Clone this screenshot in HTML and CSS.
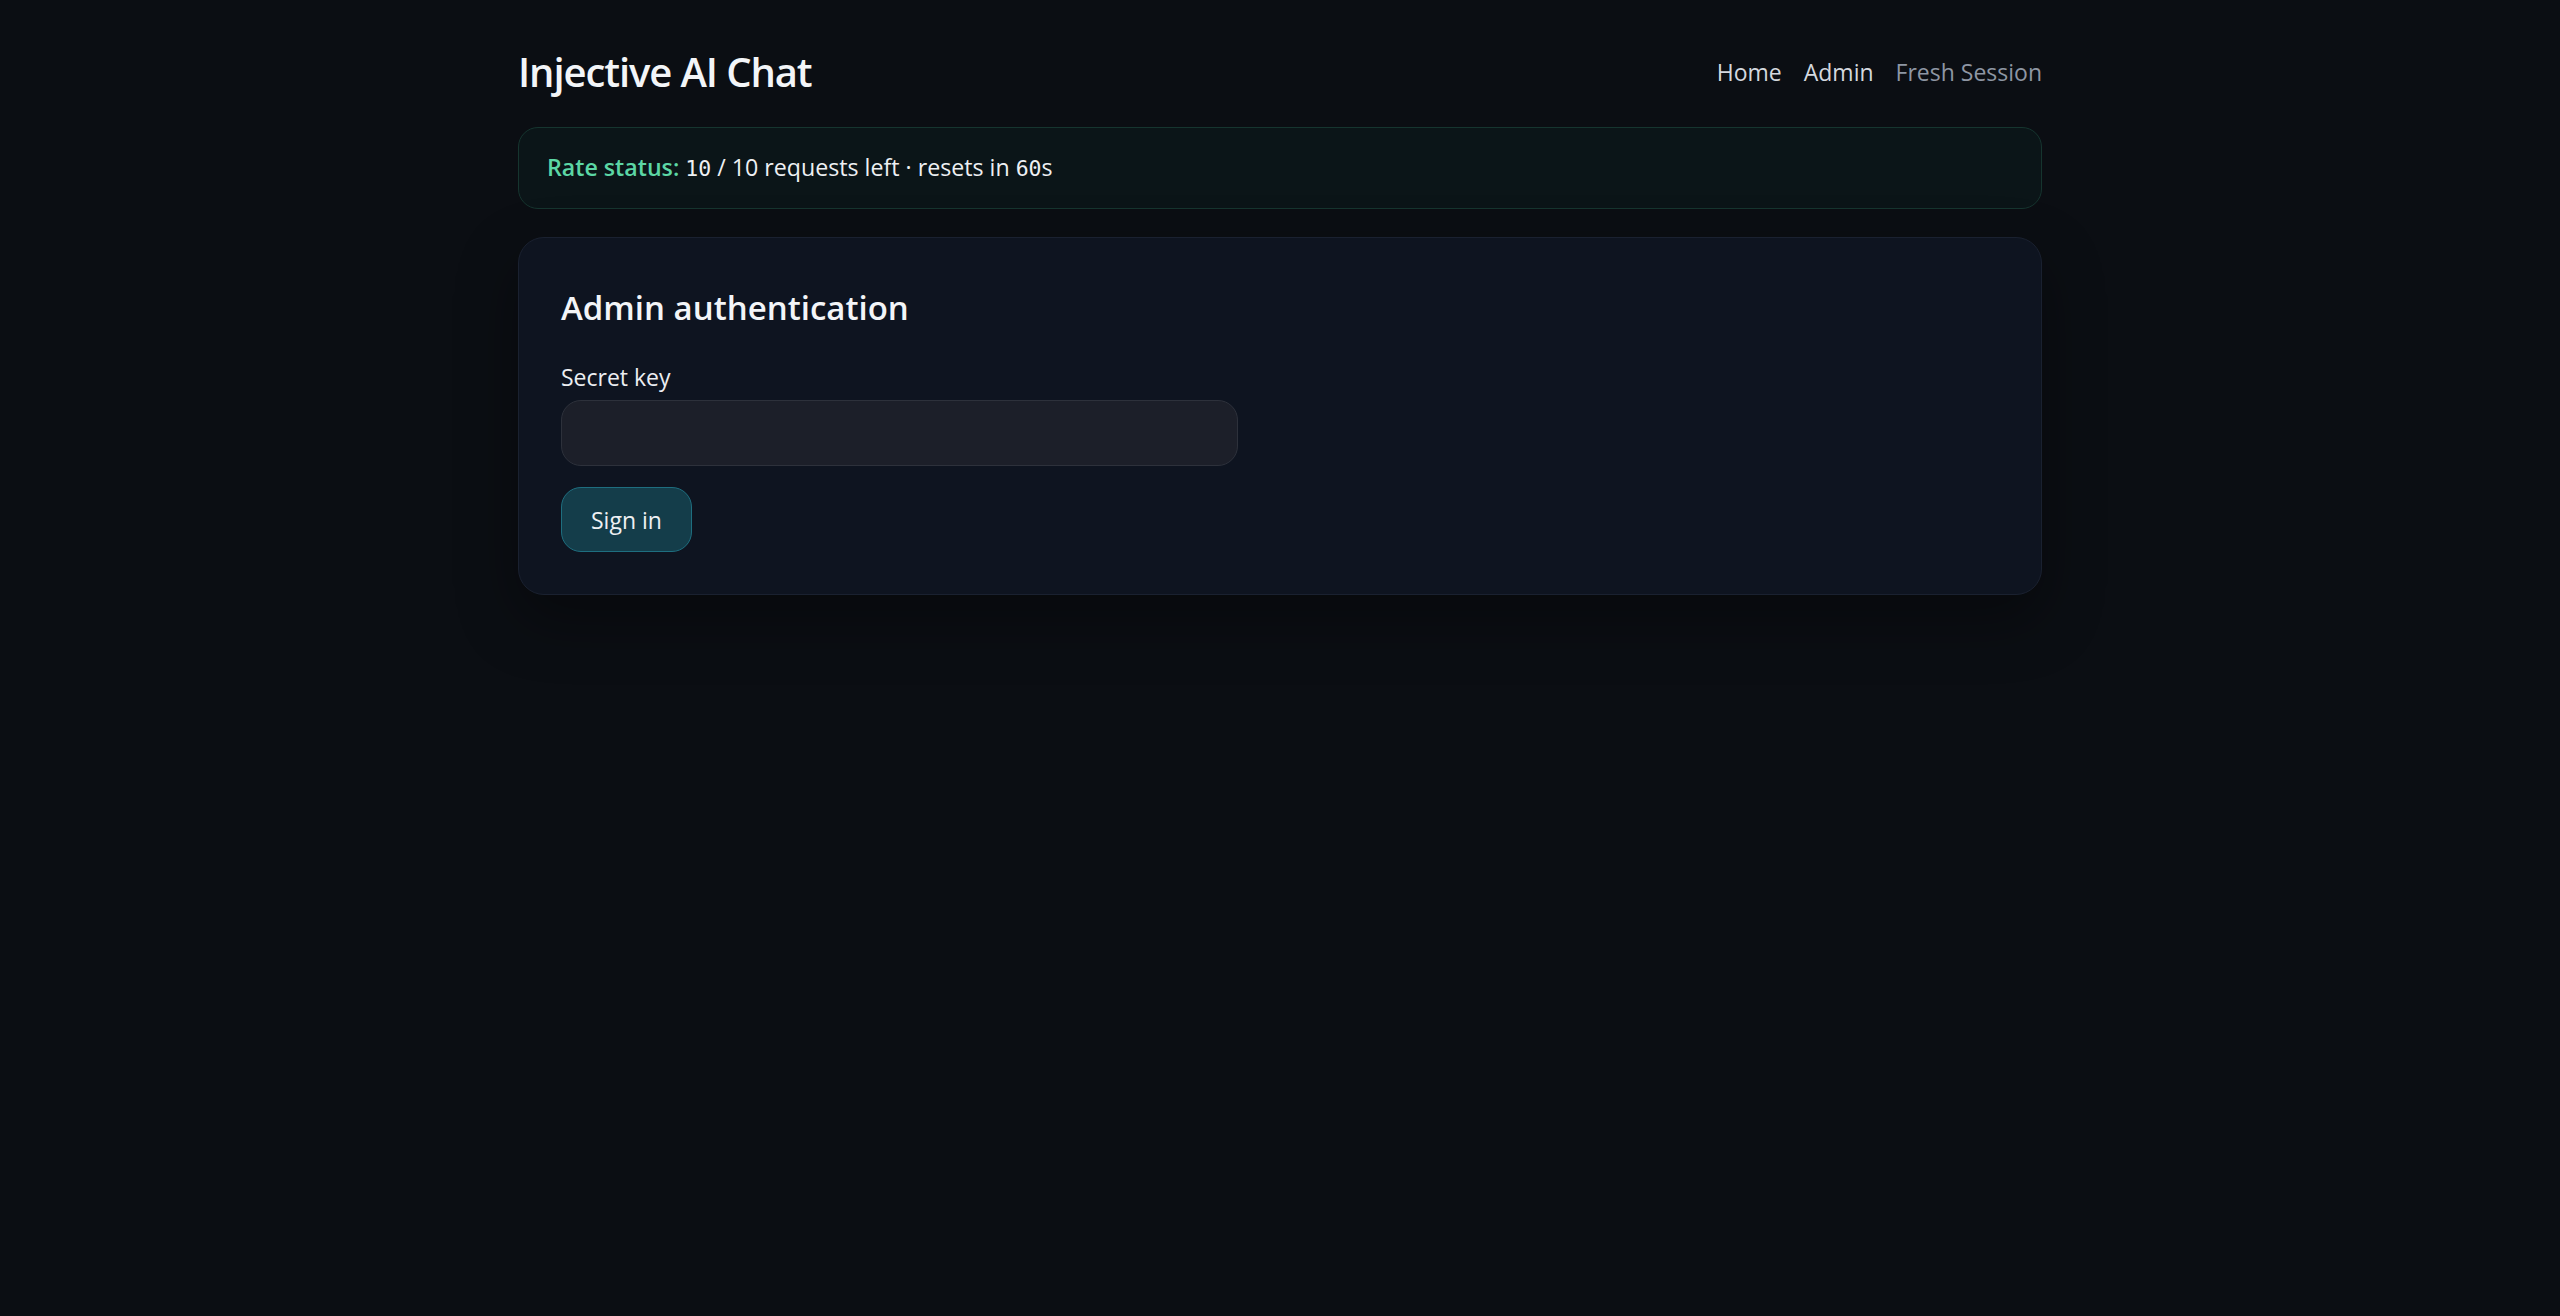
FILE: index.html
```html
<!DOCTYPE html>
<html lang="en">
<head>
<meta charset="utf-8">
<title>Injective AI Chat — Admin</title>
<link rel="stylesheet" href="styles.css">
</head>
<body>
<div class="page">
  <header class="topbar">
    <h1 class="brand">Injective AI Chat</h1>
    <nav class="nav">
      <a class="nav-link" href="#">Home</a>
      <a class="nav-link" href="#">Admin</a>
      <a class="nav-link muted" href="#">Fresh Session</a>
    </nav>
  </header>

  <div class="rate">
    <span class="rate-label">Rate status:</span> <code class="mono">10</code> / 10 requests left · resets in <code class="mono">60</code>s
  </div>

  <section class="card">
    <h2 class="card-title">Admin authentication</h2>
    <form class="form">
      <label class="field-label" for="secret">Secret key</label>
      <input class="field-input" id="secret" type="password">
      <button class="btn" type="button">Sign in</button>
    </form>
  </section>
</div>
</body>
</html>
```

FILE: styles.css
```css
html, body {
  margin: 0;
  padding: 0;
}

body {
  background: #0b0e13;
  color: #eceef2;
  font-family: "Open Sans", "Noto Sans", "Liberation Sans", sans-serif;
  min-height: 100vh;
}

.page {
  max-width: 1524px;
  margin: 0 auto;
  padding-top: 45px;
}

.topbar {
  display: flex;
  justify-content: space-between;
  align-items: center;
}

.brand {
  margin: 0;
  font-size: 40px;
  font-weight: 600;
  line-height: 53px;
  color: #f3f5f8;
  letter-spacing: -1.1px;
}

.nav {
  display: flex;
  gap: 22px;
  font-size: 23px;
}

.nav-link {
  color: #d4d8df;
  text-decoration: none;
}

.nav-link.muted {
  color: #8e96a3;
}

.rate {
  margin-top: 29px;
  padding: 21px 28px;
  border: 1px solid #16352f;
  background: #0b1518;
  border-radius: 20px;
  font-size: 23.2px;
  line-height: 37px;
  color: #eef0f3;
}

.rate-label {
  color: #5cd7a5;
  font-weight: 600;
}

.mono {
  font-family: "DejaVu Sans Mono", "Liberation Mono", monospace;
  font-size: 21.5px;
}

.card {
  margin-top: 28px;
  padding: 47px 42px 42px;
  background: #0e1420;
  border: 1px solid #1a2130;
  border-radius: 26px;
  box-shadow: 0 24px 60px rgba(0, 0, 0, 0.35);
}

.card-title {
  margin: 0 0 28px;
  font-size: 33px;
  font-weight: 600;
  line-height: 46px;
  color: #f3f5f8;
}

.form {
  display: flex;
  flex-direction: column;
  align-items: flex-start;
}

.field-label {
  font-size: 23px;
  line-height: 36px;
  color: #eceef2;
  margin-bottom: 5px;
}

.field-input {
  box-sizing: border-box;
  width: 677px;
  height: 66px;
  background: #1c1f29;
  border: 1px solid #2d313b;
  border-radius: 20px;
  padding: 0 20px;
  font-size: 23px;
  color: #eceef2;
  font-family: inherit;
  outline: none;
}

.btn {
  margin-top: 21px;
  box-sizing: border-box;
  height: 65px;
  padding: 0 29px;
  background: #143d4a;
  border: 1px solid #1e6e7f;
  border-radius: 20px;
  color: #eef0f3;
  font-family: inherit;
  font-size: 23px;
  cursor: pointer;
}
```
